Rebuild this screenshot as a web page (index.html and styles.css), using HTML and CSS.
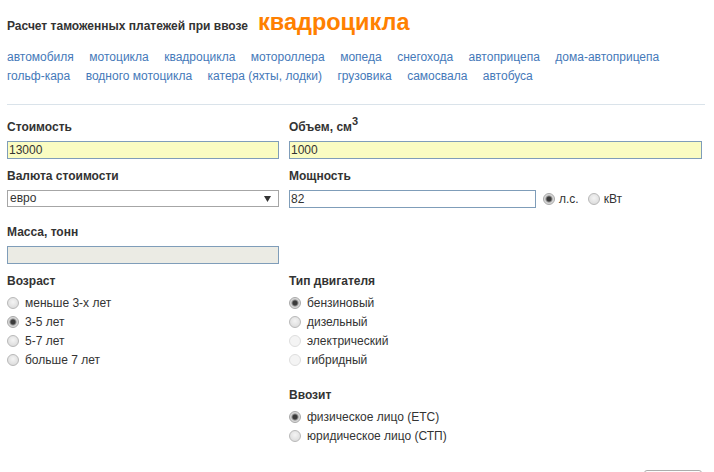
FILE: index.html
```html
<!DOCTYPE html>
<html lang="ru">
<head>
<meta charset="utf-8">
<title>Расчет таможенных платежей</title>
<link rel="stylesheet" href="styles.css">
</head>
<body>
<div class="page">
  <h1 class="title"><span class="title-text">Расчет таможенных платежей при ввозе</span><span class="title-vehicle">квадроцикла</span></h1>
  <nav class="vehicles">
    <div class="vehicles-row">
      <a href="#">автомобиля</a>
      <a href="#">мотоцикла</a>
      <a href="#">квадроцикла</a>
      <a href="#">мотороллера</a>
      <a href="#">мопеда</a>
      <a href="#">снегохода</a>
      <a href="#">автоприцепа</a>
      <a href="#">дома-автоприцепа</a>
    </div>
    <div class="vehicles-row">
      <a href="#">гольф-кара</a>
      <a href="#">водного мотоцикла</a>
      <a href="#">катера (яхты, лодки)</a>
      <a href="#">грузовика</a>
      <a href="#">самосвала</a>
      <a href="#">автобуса</a>
    </div>
  </nav>
  <hr class="divider">
  <form class="calc">
    <div class="field">
      <label class="field-label">Стоимость</label>
      <input class="text-input text-input-hl" type="text" value="13000">
    </div>
    <div class="field">
      <label class="field-label">Объем, см<sup class="sup">3</sup></label>
      <input class="text-input text-input-hl" type="text" value="1000">
    </div>
    <div class="field field-tall">
      <label class="field-label">Валюта стоимости</label>
      <div class="select-wrap">
        <select class="select">
          <option>евро</option>
          <option>доллар США</option>
          <option>рубль</option>
        </select>
        <svg class="select-arrow" width="7" height="6" viewBox="0 0 7 6"><path d="M0 0H7L3.5 6Z" fill="#333"/></svg>
      </div>
    </div>
    <div class="field field-tall">
      <label class="field-label">Мощность</label>
      <div class="power-row">
        <input class="text-input text-input-power" type="text" value="82">
        <label class="inline-option"><input class="radio" type="radio" name="unit" checked>л.с.</label>
        <label class="inline-option"><input class="radio" type="radio" name="unit">кВт</label>
      </div>
    </div>
    <div class="field">
      <label class="field-label">Масса, тонн</label>
      <input class="text-input text-input-disabled" type="text" disabled>
    </div>
    <div class="field"></div>
    <div class="field">
      <div class="field-label">Возраст</div>
      <div class="options">
        <label class="option"><input class="radio" type="radio" name="age">меньше 3-х лет</label>
        <label class="option"><input class="radio" type="radio" name="age" checked>3-5 лет</label>
        <label class="option"><input class="radio" type="radio" name="age">5-7 лет</label>
        <label class="option"><input class="radio" type="radio" name="age">больше 7 лет</label>
      </div>
    </div>
    <div class="field">
      <div class="field-label">Тип двигателя</div>
      <div class="options">
        <label class="option"><input class="radio" type="radio" name="engine" checked>бензиновый</label>
        <label class="option"><input class="radio" type="radio" name="engine">дизельный</label>
        <label class="option"><input class="radio" type="radio" name="engine" disabled>электрический</label>
        <label class="option"><input class="radio" type="radio" name="engine" disabled>гибридный</label>
      </div>
    </div>
    <div class="field"></div>
    <div class="field field-importer">
      <div class="field-label">Ввозит</div>
      <div class="options">
        <label class="option"><input class="radio" type="radio" name="who" checked>физическое лицо (ЕТС)</label>
        <label class="option"><input class="radio" type="radio" name="who">юридическое лицо (СТП)</label>
      </div>
    </div>
  </form>
  <div class="actions">
    <button class="button" type="button">Рассчитать</button>
  </div>
</div>
</body>
</html>
```

FILE: styles.css
```css
* {
  box-sizing: border-box;
}

body {
  margin: 0;
  background: #fff;
  color: #333;
  font-family: "Liberation Sans", Arial, sans-serif;
  font-size: 12px;
}

.page {
  padding: 0 12px 0 7px;
}

.title {
  margin: 0;
  padding-top: 8px;
  height: 36px;
  line-height: 28px;
  font-size: 12px;
  font-weight: bold;
  color: #333;
  white-space: nowrap;
}

.title-vehicle {
  margin-left: 10px;
  font-size: 23.5px;
  color: #ff8000;
}

.vehicles {
  margin-top: 12px;
}

.vehicles-row {
  display: flex;
  column-gap: 15.5px;
  line-height: 19px;
  height: 19px;
}

.vehicles-row a {
  color: #4579b9;
  text-decoration: none;
  white-space: nowrap;
}

.divider {
  border: 0;
  height: 1px;
  margin: 18px -3px 0 0;
  background: #dae3ea;
}

.calc {
  display: grid;
  grid-template-columns: 272px 1fr;
  column-gap: 10px;
  row-gap: 9px;
  margin-top: 14px;
}

.field-label {
  display: block;
  height: 16px;
  line-height: 16px;
  margin-bottom: 6px;
  font-weight: bold;
  color: #333;
  white-space: nowrap;
}

.sup {
  font-size: 11px;
  line-height: 0;
  vertical-align: 6px;
}

.field-tall {
  padding-bottom: 7px;
}

.text-input {
  display: block;
  width: 100%;
  height: 18px;
  margin: 0;
  padding: 0 1px;
  border: 1px solid #7f9db9;
  background: #fff;
  color: #333;
  font-family: "Liberation Sans", Arial, sans-serif;
  font-size: 12px;
  outline: none;
}

.text-input-hl {
  background: #fafcc2;
}

.text-input-disabled {
  background: #ebebe4;
}

.text-input-power {
  width: 247px;
  flex: none;
}

.select-wrap {
  position: relative;
  height: 17px;
}

.select {
  -webkit-appearance: none;
  appearance: none;
  display: block;
  width: 100%;
  height: 17px;
  margin: 0;
  padding: 0 0 0 2px;
  border: 1px solid #a6a6a6;
  border-radius: 0;
  background: #fff;
  color: #333;
  font-family: "Liberation Sans", Arial, sans-serif;
  font-size: 12px;
  line-height: 15px;
  outline: none;
}

.select-arrow {
  position: absolute;
  right: 8px;
  top: 6px;
  pointer-events: none;
}

.power-row {
  display: flex;
  align-items: center;
  height: 18px;
}

.inline-option {
  display: flex;
  align-items: center;
  white-space: nowrap;
  margin-left: 7px;
  font-weight: normal;
}

.inline-option + .inline-option {
  margin-left: 9px;
}

.inline-option .radio {
  margin-right: 4px;
}

.field-label + .options {
  margin-top: -2px;
}

.options {
  display: flex;
  flex-direction: column;
}

.option {
  display: flex;
  align-items: center;
  height: 19px;
  white-space: nowrap;
  color: #333;
}

.field-importer {
  margin-top: 9px;
}

.radio {
  -webkit-appearance: none;
  appearance: none;
  flex: none;
  width: 12px;
  height: 12px;
  margin: 0 6px 0 0;
  border: 1px solid #b8b8b8;
  border-radius: 50%;
  background: radial-gradient(circle at 50% 40%, #f4f4f4 0, #e2e2e2 60%, #d6d6d6 100%);
}

.radio:checked {
  border-color: #a8a8a8;
  background: radial-gradient(circle at 50% 50%, #3a3a3a 0, #3a3a3a 2px, #8c8c8c 3px, #d4d4d4 4px, #e8e8e8 100%);
}

.radio:disabled {
  border-color: #dedede;
  background: #f4f4f4;
}

.actions {
  display: flex;
  justify-content: flex-end;
  margin-top: 25px;
}

.button {
  width: 58px;
  height: 34px;
  padding: 12px 0 0;
  border: 1px solid #adadad;
  border-radius: 3px;
  background: linear-gradient(#fdfdfd, #e6e6e6);
  color: #333;
  font-family: "Liberation Sans", Arial, sans-serif;
  font-size: 11px;
}
```
